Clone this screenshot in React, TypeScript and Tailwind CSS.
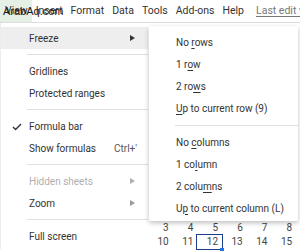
import React from 'react';

const font = { fontFamily: 'Roboto, "Liberation Sans", sans-serif' };

const Arrow = () => (
  <svg width="5" height="6" viewBox="0 0 5 6" className="fill-current">
    <path d="M0 0 L5 3 L0 6 Z" />
  </svg>
);

const Sep = ({ left = 'ml-[26px]' }: { left?: string }) => (
  <div className={`${left} h-px bg-[#e0e0e0] my-[5px]`} />
);

const Row = ({
  children,
  right,
  check,
  muted,
  active,
}: {
  children: React.ReactNode;
  right?: React.ReactNode;
  check?: boolean;
  muted?: boolean;
  active?: boolean;
}) => (
  <div
    className={`h-[22px] flex items-center pl-[28px] pr-[11px] relative ${active ? 'bg-[#eeeeee]' : ''} ${
      muted ? 'text-[#b0b0b0]' : 'text-[#333]'
    }`}
  >
    {check && (
      <svg width="10" height="8" viewBox="0 0 10 8" className="absolute left-[11px] top-[8px]">
        <path d="M1 4 L3.6 6.6 L9 1" stroke="#333" strokeWidth="1.4" fill="none" />
      </svg>
    )}
    <span className="flex-1">{children}</span>
    {right}
  </div>
);

const SubRow = ({ children }: { children: React.ReactNode }) => (
  <div className="h-[22px] flex items-center pl-[27px] text-[#333]">
    <span className="whitespace-pre">{children}</span>
  </div>
);

const U = ({ children }: { children: React.ReactNode }) => <span className="underline underline-offset-2">{children}</span>;

const menus = ['View', 'Insert', 'Format', 'Data', 'Tools', 'Add-ons', 'Help'];

export default function App() {
  return (
    <div className="w-[300px] h-[251px] bg-white overflow-hidden relative text-[10px]" style={font}>
      <div className="h-[23px] flex items-stretch border-b border-[#dadce0] text-[10.5px] text-[#333] whitespace-nowrap">
        {menus.map((m, i) => (
          <span
            key={m}
            className={`flex items-center px-[4px] ${i === 0 ? 'bg-[#e6efe6] pl-[5px] pr-[4px]' : ''}`}
          >
            {m}
          </span>
        ))}
        <span className="flex items-center ml-[8px] text-[#777] underline underline-offset-2">Last edit was seconds ago</span>
      </div>

      <div className="flex">
        <div className="w-[148px] pt-[4px] border-l border-[#ececec] shrink-0">
          <Row active right={<span className="text-[#333] mr-[2px]"><Arrow /></span>}>
            Freeze
          </Row>
          <Sep />
          <Row>Gridlines</Row>
          <Row>Protected ranges</Row>
          <Sep />
          <Row check>Formula bar</Row>
          <Row right={<span className="text-[#555]">Ctrl+'</span>}>Show formulas</Row>
          <Sep />
          <Row muted right={<span className="text-[#b0b0b0] mr-[2px]"><Arrow /></span>}>
            Hidden sheets
          </Row>
          <Row right={<span className="text-[#999] mr-[2px]"><Arrow /></span>}>Zoom</Row>
          <Sep />
          <Row>Full screen</Row>
        </div>

        <div className="flex-1 flex flex-col">
          <div className="mt-[3px] ml-[1px] w-[149px] pt-[5px] pb-[2px] bg-white shadow-[0_2px_5px_rgba(0,0,0,0.25)] rounded-[2px] relative z-10">
            <SubRow>No <U>r</U>ows</SubRow>
            <SubRow>1 r<U>o</U>w</SubRow>
            <SubRow>2 ro<U>w</U>s</SubRow>
            <SubRow><U>U</U>p to current row (9)</SubRow>
            <div className="ml-[26px] h-px bg-[#e0e0e0] mt-[6px] mb-[5px]" />
            <SubRow>No <U>c</U>olumns</SubRow>
            <SubRow>1 co<U>l</U>umn</SubRow>
            <SubRow>2 colu<U>m</U>ns</SubRow>
            <SubRow>U<U>p</U> to current column (L)</SubRow>
          </div>
          <div className="grid grid-cols-[repeat(6,24.7px)] text-[#444] text-[10px] leading-[14px]">
            {['3', '4', '5', '6', '7', '8', '10', '11', '12', '13', '14', '15'].map((n) => (
              <div
                key={n}
                className={`text-right pr-[4px] h-[14px] ${
                  n === '12' ? 'relative outline outline-[1.5px] outline-[#1a3f8a]' : ''
                }`}
              >
                {n}
                {n === '12' && <span className="absolute right-[-2px] bottom-[-3px] w-[4px] h-[4px] bg-[#1a73e8]" />}
              </div>
            ))}
          </div>
        </div>
      </div>

      <span
        className="absolute left-[3px] top-[3px] text-[11px] text-[#1a1a1a]"
        style={{ fontFamily: '"Liberation Sans", Arial, sans-serif' }}
      >
        ArabAq.com
      </span>
    </div>
  );
}
